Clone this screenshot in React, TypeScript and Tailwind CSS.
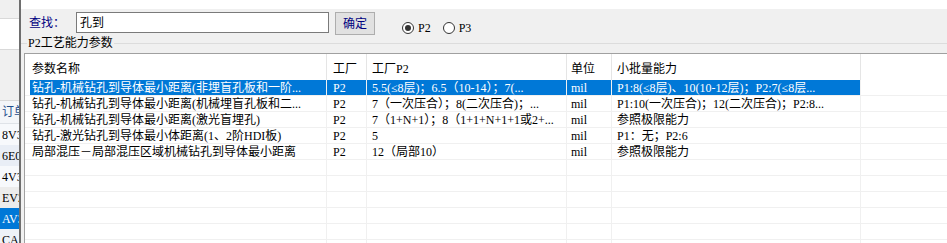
import React from "react";

const rows: string[][] = [
  ["钻孔-机械钻孔到导体最小距离(非埋盲孔板和一阶...", "P2", "5.5(≤8层)；6.5（10-14）；7(...", "mil", "P1:8(≤8层)、10(10-12层)；P2:7(≤8层..."],
  ["钻孔-机械钻孔到导体最小距离(机械埋盲孔板和二...", "P2", "7（一次压合）；8(二次压合)；...", "mil", "P1:10(一次压合)；12(二次压合)；P2:8..."],
  ["钻孔-机械钻孔到导体最小距离(激光盲埋孔)", "P2", "7（1+N+1）；8（1+1+N+1+1或2+...", "mil", "参照极限能力"],
  ["钻孔-激光钻孔到导体最小体距离(1、2阶HDI板)", "P2", "5", "mil", "P1：无；P2:6"],
  ["局部混压－局部混压区域机械钻孔到导体最小距离", "P2", "12（局部10）", "mil", "参照极限能力"],
  ["", "", "", "", ""],
  ["", "", "", "", ""],
  ["", "", "", "", ""],
  ["", "", "", "", ""],
  ["", "", "", "", ""],
  ["", "", "", "", ""],
];

const bodyCols = [
  "w-[297px] pl-[2px]",
  "w-[40px] pl-[6px]",
  "w-[200px] pl-[5px]",
  "w-[45px] pl-[4px]",
  "w-[249px] pl-[5px]",
];

const headCols = [
  { t: "参数名称", c: "w-[302px] pl-[7px]" },
  { t: "工厂", c: "w-[40px] pl-[6px]" },
  { t: "工厂P2", c: "w-[200px] pl-[5px]" },
  { t: "单位", c: "w-[45px] pl-[4px]" },
  { t: "小批量能力", c: "w-[249px] pl-[5px]" },
];

const sideRows = [
  { t: "", c: "h-[19px] bg-[#f0f0f0] border-b border-[#d9d9d9]" },
  { t: "", c: "h-[31px] bg-white border-b border-[#d9d9d9]" },
  { t: "", c: "h-[51px] bg-[#f0f0f0] border-b border-[#d9d9d9]" },
  { t: "订单", c: "h-[23px] bg-[#f4f6f9] text-[#1f4e8c] border-b border-[#dfe3e8]" },
  { t: "8V3", c: "h-[21px] bg-[#f7f9fc]" },
  { t: "6E0", c: "h-[21px] bg-[#e9eef6]" },
  { t: "4V3", c: "h-[21px] bg-[#f7f9fc]" },
  { t: "EV2", c: "h-[21px] bg-[#ececec]" },
  { t: "AV3", c: "h-[21px] bg-[#0078d7] text-white" },
  { t: "CA5", c: "h-[21px] bg-[#eef2f7]" },
];

export default function App() {
  return (
    <div className="w-[947px] h-[243px] flex overflow-hidden bg-white text-[12px] leading-[14px] text-black font-['Liberation_Serif','Noto_Sans_CJK_SC',serif]">
      {/* background window strip */}
      <div className="w-[19px] shrink-0 flex flex-col overflow-hidden">
        {sideRows.map((r, i) => (
          <div key={i} className={`shrink-0 flex items-center pl-[2px] whitespace-nowrap overflow-hidden ${r.c}`}>
            {r.t}
          </div>
        ))}
      </div>

      {/* dialog */}
      <div className="flex-1 flex flex-col bg-[#f0f0f0] border-l-2 border-[#6e6e6e] min-w-0">
        <div className="h-[9px] bg-white shrink-0" />

        <div className="h-[26px] shrink-0 flex items-start pt-[3px] pl-[8px]">
          <div className="w-[47px] h-[21px] flex items-center text-[#000080]">查找：</div>
          <div className="w-[253px] h-[21px] bg-white border border-[#7a7a7a] flex items-center pl-[3px]">孔到</div>
          <div className="ml-[6px] w-[40px] h-[23px] bg-[#e1e1e1] border border-[#adadad] flex items-center justify-center text-[#000080]">确定</div>
          <div className="ml-[27px] mt-[9px] flex items-center">
            <div className="w-[12px] h-[12px] rounded-full border border-[#333333] bg-white flex items-center justify-center">
              <div className="w-[6px] h-[6px] rounded-full bg-[#333333]" />
            </div>
            <span className="ml-[4px]">P2</span>
            <div className="ml-[12px] w-[12px] h-[12px] rounded-full border border-[#333333] bg-white" />
            <span className="ml-[4px]">P3</span>
          </div>
        </div>

        {/* group box caption */}
        <div className="mt-[1px] h-[14px] shrink-0 flex items-center">
          <div className="w-[6px] h-px bg-[#dcdcdc]" />
          <span className="px-px">P2工艺能力参数</span>
          <div className="flex-1 h-px bg-[#dcdcdc]" />
        </div>

        {/* list view */}
        <div className="mt-[3px] ml-[3px] flex-1 bg-white border-t border-l border-[#a0a0a0] overflow-hidden">
          <div className="h-[26px] flex">
            {headCols.map((h) => (
              <div key={h.t} className={`shrink-0 flex items-center pt-[3px] border-r border-[#e5e5e5] ${h.c}`}>
                {h.t}
              </div>
            ))}
            <div className="flex-1" />
          </div>
          {rows.map((r, i) => (
            <div key={i} className="h-[16px] flex border-b border-[#f0f0f0]">
              <div className="w-[5px] shrink-0" />
              {r.map((cell, j) => (
                <div
                  key={j}
                  className={`shrink-0 flex items-center overflow-hidden whitespace-nowrap border-r border-[#f0f0f0] ${bodyCols[j]} ${i === 0 ? "bg-[#0078d7] text-white" : ""}`}
                >
                  {cell}
                </div>
              ))}
              <div className="flex-1" />
            </div>
          ))}
        </div>
      </div>
    </div>
  );
}
